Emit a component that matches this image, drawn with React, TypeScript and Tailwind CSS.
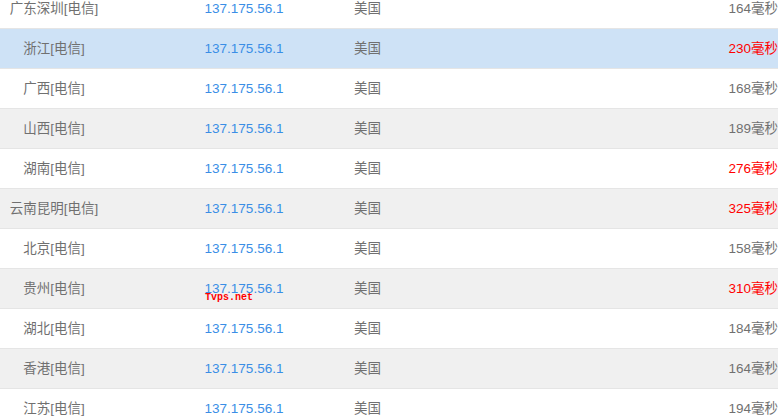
import React from 'react';

type Row = {
  city: string;
  ip: string;
  country: string;
  ms: number;
};

const rows: Row[] = [
  { city: '广东深圳[电信]', ip: '137.175.56.1', country: '美国', ms: 164 },
  { city: '浙江[电信]', ip: '137.175.56.1', country: '美国', ms: 230 },
  { city: '广西[电信]', ip: '137.175.56.1', country: '美国', ms: 168 },
  { city: '山西[电信]', ip: '137.175.56.1', country: '美国', ms: 189 },
  { city: '湖南[电信]', ip: '137.175.56.1', country: '美国', ms: 276 },
  { city: '云南昆明[电信]', ip: '137.175.56.1', country: '美国', ms: 325 },
  { city: '北京[电信]', ip: '137.175.56.1', country: '美国', ms: 158 },
  { city: '贵州[电信]', ip: '137.175.56.1', country: '美国', ms: 310 },
  { city: '湖北[电信]', ip: '137.175.56.1', country: '美国', ms: 184 },
  { city: '香港[电信]', ip: '137.175.56.1', country: '美国', ms: 164 },
  { city: '江苏[电信]', ip: '137.175.56.1', country: '美国', ms: 194 },
];

const App = () => {
  const hovered = 1;

  return (
    <main
      className="relative h-[419px] w-[778px] overflow-hidden bg-white text-[13.5px] text-[#707070]"
      style={{ fontFamily: '"Liberation Sans", "Noto Sans CJK SC", sans-serif' }}
    >
      <div className="-mt-[11px]">
        {rows.map((row, i) => {
          // odd rows striped, the hovered one is blue
          let bg = i % 2 === 1 ? 'bg-[#f0f0f0]' : 'bg-white';
          if (i === hovered) bg = 'bg-[#cee2f6]';
          return (
            <div
              key={i}
              className={`flex h-[40px] items-center border-b border-[#e5e5e5] pt-[2px] ${bg}`}
            >
              <div className="w-[108px] text-center">{row.city}</div>
              <div className="ml-[36px] w-[200px] text-center text-[#3a8ee6]">{row.ip}</div>
              <div className="flex-1 pl-[10px]">{row.country}</div>
              <div className={row.ms > 200 ? 'text-[#ff0000]' : ''}>{row.ms}毫秒</div>
            </div>
          );
        })}
      </div>
      {/* watermark */}
      <span
        className="absolute left-[205px] top-[290px] text-[10px] font-bold text-[#ff0000]"
        style={{ fontFamily: '"Liberation Mono", monospace' }}
      >
        Tvps.net
      </span>
    </main>
  );
};

export default App;
